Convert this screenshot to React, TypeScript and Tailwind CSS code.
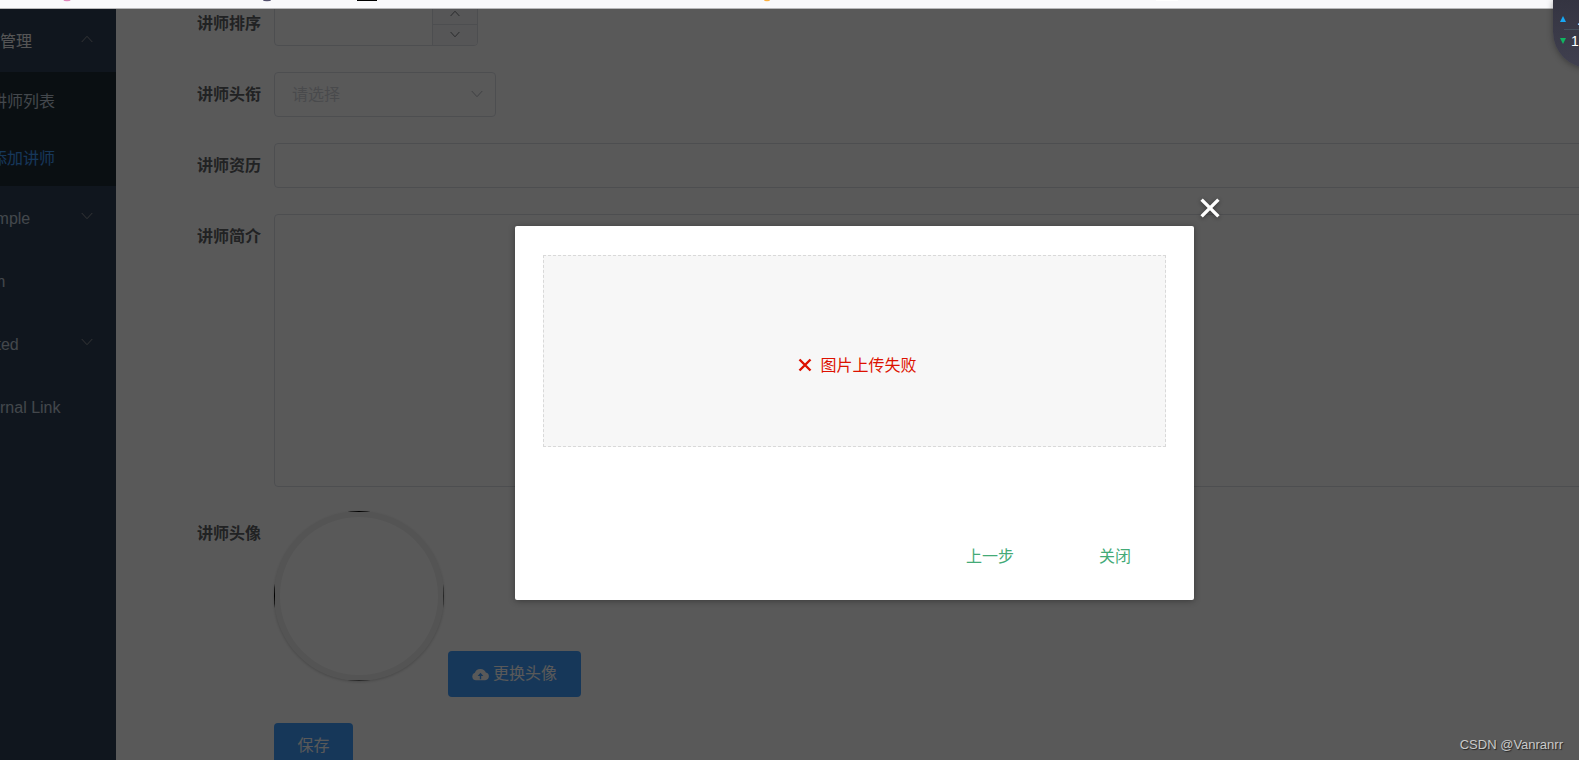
import type { ReactNode } from "react";

function Chevron({ up = false, className = "" }: { up?: boolean; className?: string }) {
  return (
    <svg viewBox="0 0 12 8" fill="none" stroke="currentColor" strokeWidth="1" strokeLinecap="round" className={className} aria-hidden="true">
      <path d={up ? "M1 6.7 L6 1.3 L11 6.7" : "M1 1.3 L6 6.7 L11 1.3"} />
    </svg>
  );
}

function MenuItem({ label, title = false, arrow }: { label: string; title?: boolean; arrow?: "up" | "down" }) {
  return (
    <a href="#" className={`flex h-[63px] items-center justify-between pt-[3px] pr-[23px] ${title ? "text-[#f4f4f5]" : "text-[#bfcbd9]"}`}>
      <span className="-ml-8 whitespace-nowrap">{label}</span>
      {arrow && <Chevron up={arrow === "up"} className="mb-1.5 h-2 w-3 text-[#909399]" />}
    </a>
  );
}

function SubMenuItem({ label, active = false }: { label: string; active?: boolean }) {
  return (
    <a href="#" className={`flex h-[57px] items-center pt-[3px] ${active ? "text-[#409eff]" : "text-[#bfcbd9]"}`}>
      <span className="-ml-[9px] whitespace-nowrap">{label}</span>
    </a>
  );
}

function Row({ label, htmlFor, children }: { label: string; htmlFor: string; children: ReactNode }) {
  return (
    <div className="flex items-start">
      <label htmlFor={htmlFor} className="w-[158px] shrink-0 pr-[13px] text-right leading-[45px] font-bold text-[#606266]">
        {label}
      </label>
      <div className="min-w-0 flex-1">{children}</div>
    </div>
  );
}

function Sidebar() {
  return (
    <nav className="w-[116px] shrink-0 overflow-hidden bg-[#304156]">
      <MenuItem label="讲师管理" title arrow="up" />
      <div className="bg-[#1f2d35]">
        <SubMenuItem label="讲师列表" />
        <SubMenuItem label="添加讲师" active />
      </div>
      <MenuItem label="Example" arrow="down" />
      <MenuItem label="Form" />
      <MenuItem label="Nested" arrow="down" />
      <MenuItem label="External Link" />
    </nav>
  );
}

function TeacherForm() {
  return (
    <form className="-mt-2 -mr-2 flex flex-col gap-6">
      <div className="flex flex-col gap-[26px]">
        <Row label="讲师排序" htmlFor="sort">
          <div className="flex h-[45px] w-[204px] overflow-hidden rounded border border-[#dcdfe6]">
            <input id="sort" type="text" className="min-w-0 flex-1 px-4 outline-none" />
            <div className="flex w-[45px] flex-col border-l border-[#dcdfe6] bg-[#f5f7fa] text-[#606266]">
              <button type="button" aria-label="+" className="flex h-[23px] items-center justify-center border-b border-[#dcdfe6]">
                <Chevron up className="h-[7px] w-2.5" />
              </button>
              <button type="button" aria-label="-" className="flex flex-1 items-center justify-center pb-0.5">
                <Chevron className="h-[7px] w-2.5" />
              </button>
            </div>
          </div>
        </Row>
        <Row label="讲师头衔" htmlFor="level">
          <div className="relative w-[222px]">
            <select id="level" className="h-[45px] w-full appearance-none rounded border border-[#dcdfe6] pl-[17px] text-[#d2d5db] outline-none">
              <option>请选择</option>
            </select>
            <Chevron className="pointer-events-none absolute top-[18px] right-3 h-2 w-3.5 text-[#b4b8c0]" />
          </div>
        </Row>
        <Row label="讲师资历" htmlFor="career">
          <input id="career" type="text" className="block h-[45px] w-full rounded border border-[#dcdfe6] px-4 outline-none" />
        </Row>
        <Row label="讲师简介" htmlFor="intro">
          <textarea id="intro" className="block h-[273px] w-full resize-none rounded border border-[#dcdfe6] p-4 outline-none" />
        </Row>
      </div>
      <Row label="讲师头像" htmlFor="avatar">
        <div className="flex items-end gap-1">
          <div className="relative mb-4 size-[170px] rounded-full shadow-[0_1px_3px_rgba(0,0,0,0.2)]">
            <div className="size-full overflow-hidden rounded-full">
              <div className="size-full border border-t-black border-r-[#777] border-b-[#777] border-l-black" />
            </div>
            <div className="absolute inset-0 rounded-full shadow-[inset_0_0_0_6px_rgba(0,0,0,0.06)]" />
          </div>
          <button id="avatar" type="button" className="flex h-[46px] items-center gap-1 rounded bg-[#409eff] px-6 text-white">
            <svg viewBox="0 0 17 14" className="h-3.5 w-[17px]" aria-hidden="true">
              <path
                fill="currentColor"
                fillRule="evenodd"
                d="M4 13.2A3.8 3.8 0 0 1 2.9 5.8 A5.7 5.3 0 0 1 13.8 5.5 A3.9 3.9 0 0 1 13.2 13.2Z M8.5 5.7 L5.6 9 H7.8 V12.2 H9.2 V9 H11.4Z"
              />
            </svg>
            更换头像
          </button>
        </div>
      </Row>
      <div className="pt-0.5 pl-[158px]">
        <button type="button" className="h-[46px] w-[79px] rounded bg-[#409eff] text-white">
          保存
        </button>
      </div>
    </form>
  );
}

function UploadDialog() {
  return (
    <div className="absolute inset-0 flex items-center justify-center pt-[66px] pl-[130px]">
      <section role="dialog" aria-modal="true" className="relative w-[679px] rounded-xs bg-white px-7 pt-[29px] pb-[19px] shadow-[0_1px_6px_rgba(0,0,0,0.35)]">
        <button type="button" aria-label="×" className="absolute -top-7 -right-[26px] text-white drop-shadow-[0_1px_2px_rgba(0,0,0,0.4)]">
          <svg viewBox="0 0 20 20" className="size-5" stroke="currentColor" strokeWidth="3.4" aria-hidden="true">
            <path d="M1.6 1.6 L18.4 18.4 M18.4 1.6 L1.6 18.4" />
          </svg>
        </button>
        <div className="flex h-[192px] items-center justify-center gap-2 border border-dashed border-[#d9d9d9] bg-[#f7f7f7] pt-[29px] pl-1.5 text-[#dd1100]">
          <svg viewBox="0 0 14 14" className="mb-0.5 size-3.5" stroke="currentColor" strokeWidth="2.4" aria-hidden="true">
            <path d="M1.5 1.5 L12.5 12.5 M12.5 1.5 L1.5 12.5" />
          </svg>
          <span>图片上传失败</span>
        </div>
        <div className="mt-[86px] flex justify-end gap-[15px] text-[#44aa77]">
          <button type="button" className="h-12 px-[35px]">上一步</button>
          <button type="button" className="h-12 px-[35px]">关闭</button>
        </div>
      </section>
    </div>
  );
}

function SpeedWidget() {
  return (
    <aside className="absolute top-0 right-0 h-20 w-9 overflow-hidden pl-2.5">
      <div className="flex h-[68px] w-20 flex-col rounded-bl-[36px] bg-linear-to-b from-[#343441] to-[#40404f] pt-[11px] pl-[7px] text-[14px] leading-[18px] text-white shadow-[0_1px_6px_rgba(0,0,0,0.35)]">
        <div className="flex items-center gap-[11px]">
          <svg viewBox="0 0 6 6" className="mb-0.5 size-1.5 fill-[#17a8f5]" aria-hidden="true"><path d="M3 0 L6 6 H0Z" /></svg>
          <span>.</span>
        </div>
        <div className="ml-1 h-px bg-[#44505c]" />
        <div className="mt-0.5 flex items-center gap-[5px]">
          <svg viewBox="0 0 6 6" className="size-1.5 fill-[#10b561]" aria-hidden="true"><path d="M0 0 H6 L3 6Z" /></svg>
          <span>1</span>
        </div>
      </div>
    </aside>
  );
}

export default function App() {
  return (
    <div className="relative flex h-screen flex-col overflow-hidden bg-white font-['Liberation_Sans','Noto_Sans_CJK_SC',sans-serif] text-[16px] leading-6">
      <header className="h-[9px] shrink-0 border-b border-[#b8b8ba] bg-[#f9f9fb]">
        <svg className="block h-2 w-full" aria-hidden="true">
          <ellipse cx="67" cy="0" rx="3.5" ry="1.2" fill="#df86bb" />
          <ellipse cx="267" cy="0" rx="4" ry="1.2" fill="#54506e" />
          <rect x="357" width="20" height="1" fill="#000" />
          <ellipse cx="767" cy="0" rx="3" ry="1.2" fill="#fbb040" />
          <rect x="1156" width="22" height="1" fill="#fff" />
        </svg>
      </header>
      <div className="relative flex min-h-0 flex-1">
        <Sidebar />
        <main className="min-w-0 flex-1 overflow-hidden">
          <TeacherForm />
        </main>
        <div className="absolute inset-0 bg-black/65" />
      </div>
      <UploadDialog />
      <SpeedWidget />
      <p className="absolute right-4 bottom-[5px] text-[13px] leading-5 text-[#c9c9c9] [text-shadow:1px_1px_1px_rgba(0,0,0,0.6)]">CSDN @Vanranrr</p>
    </div>
  );
}
